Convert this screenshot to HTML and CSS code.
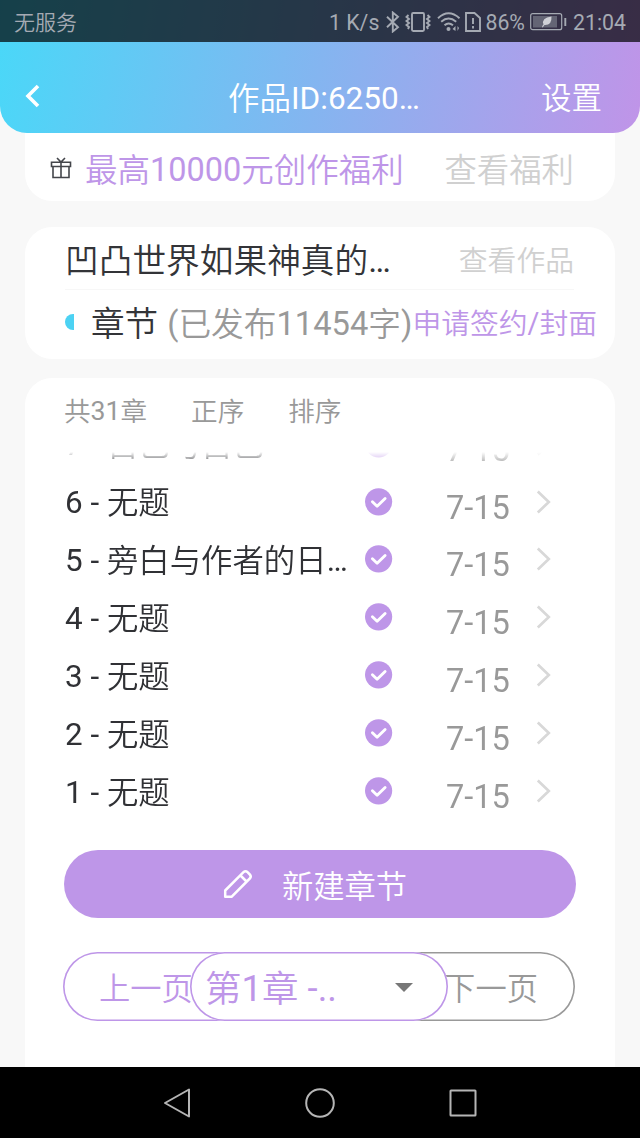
FILE: index.html
```html
<!DOCTYPE html>
<html lang="zh-CN">
<head>
    <meta charset="UTF-8">
    <meta name="viewport" content="width=device-width, initial-scale=1.0">
    <title>作品管理</title>
    <link rel="stylesheet" href="styles.css">
</head>
<body>
    <svg class="sprite" width="0" height="0">
        <symbol id="check" viewBox="0 0 28 28">
            <circle cx="13.600" cy="13.800" r="13.6" fill="#be96e8"/>
            <path d="M7.400 13.800l4.700 4.500 8-7.800" fill="none" stroke="#fff" stroke-width="2.9" stroke-linecap="round" stroke-linejoin="round"/>
        </symbol>
        <symbol id="arrow" viewBox="0 0 16 26">
            <path d="M1.8 2.500l11 10.500-11 10.500" fill="none" stroke="#d8d8d8" stroke-width="2.7"/>
        </symbol>
    </svg>

    <header class="header">
        <div class="status-bar">
            <span class="carrier">无服务</span>
            <div class="status-icons">
                <span class="speed">1 K/s</span>
                <svg class="bluetooth" width="14" height="22" viewBox="0 0 14 22"><path d="M1 5.8l11 10.400-5.200 4.300V1.500L12 5.800 1 16.200"/></svg>
                <svg class="vibrate" width="26" height="20" viewBox="0 0 26 20">
                    <rect x="7" y="1" width="12" height="18" rx="1.2"/>
                    <path d="M3.500 3l-2 2 2.500 2-2.500 2L4 11l-2.500 2L4 15l-1 2M22.500 3l2 2L22 7l2.500 2L22 11l2.500 2L22 15l1 2"/>
                </svg>
                <svg class="wifi" width="24" height="20" viewBox="0 0 24 20">
                    <path d="M1 6.200Q11.500-3.500 22.500 6.200M4.200 9.700Q11.500 3.300 19.200 9.700M7.500 13.200Q11.500 9.600 16 13.200"/>
                    <circle class="fill" cx="11.500" cy="17" r="2"/>
                    <path class="fill thin" d="M15.500 17l3-3v5zM20.500 14v5l1.500-3z"/>
                </svg>
                <svg class="sim" width="16" height="20" viewBox="0 0 16 20">
                    <path d="M1 1h8.500L15 6v13H1zM8 6v6M8 14v2.500"/>
                </svg>
                <span class="percent">86%</span>
                <svg class="battery" width="37" height="18" viewBox="0 0 37 18">
                    <rect class="thin" x=".7" y=".7" width="31" height="16" rx="2"/>
                    <rect class="level" x="3" y="3" width="24" height="11.500"/>
                    <path class="leaf" d="M12 14.200q.5-2 1.500-2.700Q11 5 21.500 3.500q.5 9-7 8.600-1 .7-1.500 2.100z"/>
                    <path d="M35.300 5v8"/>
                </svg>
                <span class="clock">21:04</span>
            </div>
        </div>
        <nav class="nav">
            <svg class="back" width="16" height="24" viewBox="0 0 16 24"><path d="M13 2L3 12l10 10" fill="none" stroke="#fff" stroke-width="3.600"/></svg>
            <h1 class="nav-title">作品<span class="n">ID:6250…</span></h1>
            <a class="nav-link">设置</a>
        </nav>
    </header>

    <main class="content">
        <section class="card welfare">
            <svg class="gift" width="22" height="22" viewBox="0 0 22 22">
                <path d="M1.500 5.200h19v4.300h-19zM3 9.500v11h16v-11M11 5.200v15.300M7 1l4 4 4-4" fill="none" stroke="#44464b" stroke-width="1.600"/>
            </svg>
            <span class="welfare-text">最高<span class="n">10000</span>元创作福利</span>
            <a class="welfare-link">查看福利</a>
        </section>

        <section class="card work">
            <div class="work-row">
                <h2 class="work-title">凹凸世界如果神真的<span class="n">…</span></h2>
                <a class="work-link">查看作品</a>
            </div>
            <div class="work-row chapter-row">
                <i class="dot"></i>
                <b class="chapter-label">章节</b>
                <span class="words"><span class="n">(</span>已发布<span class="n">11454</span>字<span class="n">)</span></span>
                <a class="apply">申请签约<span class="n">/</span>封面</a>
            </div>
        </section>

        <section class="card chapters">
            <div class="toolbar">
                <span>共<span class="n">31</span>章</span>
                <a>正序</a>
                <a>排序</a>
            </div>
            <div class="list">
                <div class="row"><span class="name"><span class="n">7 - </span>自己与自己</span><svg class="check"><use href="#check"/></svg><span class="date">7-15</span><svg class="arrow"><use href="#arrow"/></svg></div>
                <div class="row"><span class="name"><span class="n">6 - </span>无题</span><svg class="check"><use href="#check"/></svg><span class="date">7-15</span><svg class="arrow"><use href="#arrow"/></svg></div>
                <div class="row"><span class="name"><span class="n">5 - </span>旁白与作者的日<span class="n">…</span></span><svg class="check"><use href="#check"/></svg><span class="date">7-15</span><svg class="arrow"><use href="#arrow"/></svg></div>
                <div class="row"><span class="name"><span class="n">4 - </span>无题</span><svg class="check"><use href="#check"/></svg><span class="date">7-15</span><svg class="arrow"><use href="#arrow"/></svg></div>
                <div class="row"><span class="name"><span class="n">3 - </span>无题</span><svg class="check"><use href="#check"/></svg><span class="date">7-15</span><svg class="arrow"><use href="#arrow"/></svg></div>
                <div class="row"><span class="name"><span class="n">2 - </span>无题</span><svg class="check"><use href="#check"/></svg><span class="date">7-15</span><svg class="arrow"><use href="#arrow"/></svg></div>
                <div class="row"><span class="name"><span class="n">1 - </span>无题</span><svg class="check"><use href="#check"/></svg><span class="date">7-15</span><svg class="arrow"><use href="#arrow"/></svg></div>
            </div>
            <button class="create">
                <svg width="30" height="30" viewBox="0 0 30 30"><path d="M2.200 27.800v-6.300L20.500 3.200q2-2 4 0l2.300 2.300q2 2 0 4L8.500 27.800zM17.500 6.500l6 6" fill="none" stroke="#fff" stroke-width="2.500" stroke-linejoin="round"/></svg>
                <span>新建章节</span>
            </button>
            <div class="pager">
                <button class="page prev">上一页</button>
                <div class="page select"><span>第<span class="n">1</span>章<span class="n"> -..</span></span><i class="caret"></i></div>
                <button class="page next">下一页</button>
            </div>
        </section>
    </main>

    <footer class="system-nav">
        <svg width="28" height="32" viewBox="0 0 28 32"><path d="M26 2.500v27L2 16z"/></svg>
        <svg width="32" height="32" viewBox="0 0 32 32"><circle cx="16" cy="16" r="13.800"/></svg>
        <svg width="28" height="28" viewBox="0 0 28 28"><rect x="1.500" y="1.500" width="25" height="25" rx=".5"/></svg>
    </footer>
</body>
</html>
```

FILE: styles.css
```css
:root {
    --purple: #be96e8;
    --cyan: #4cd2f3;
    --dark: #333438;
    --gray: #999;
    --light: #d0d0d0;
}

* {
    margin: 0;
    padding: 0;
    box-sizing: border-box;
}

body {
    width: 640px;
    height: 1138px;
    display: flex;
    flex-direction: column;
    overflow: hidden;
    background: #f8f8f8;
    font-family: Roboto, "Noto Sans CJK SC", sans-serif;
    font-weight: 350;
    white-space: nowrap;
}

.sprite {
    display: none;
}

h1, h2, b {
    font-weight: inherit;
}

button {
    font-family: inherit;
    font-weight: inherit;
    border: none;
    background: none;
}

/* latin and digits */
.n {
    font-weight: 400;
    line-height: 1;
    vertical-align: 0.04em;
}

/* header */
.header {
    height: 133px;
    flex: none;
    background: linear-gradient(100deg, #49d8f8 0%, #84b5f0 50%, #c094e8 100%);
    border-radius: 0 0 27px 27px;
    overflow: hidden;
}

.status-bar {
    height: 42px;
    padding: 2px 14px 0;
    display: flex;
    align-items: center;
    justify-content: space-between;
    background: rgba(0, 0, 0, 0.7);
    color: #a5aab3;
    font-size: 21px;
}

.carrier {
    padding-bottom: 2px;
}

.status-icons {
    display: flex;
    align-items: center;
    font-size: 21.3px;
    font-weight: 400;
}

.status-icons svg {
    fill: none;
    stroke: #a5aab3;
    stroke-width: 1.9;
}

.status-icons .fill {
    fill: #a5aab3;
    stroke: none;
}

.status-icons .thin {
    stroke-width: 1.2;
}

.status-icons .level {
    fill: #646575;
    stroke: none;
}

.status-icons .leaf {
    fill: #cfd0d6;
    stroke: none;
}

.bluetooth { margin-left: 7px; }
.vibrate { margin-left: 5px; }
.wifi { margin-left: 6px; }
.sim { margin-left: 4px; }
.percent { margin-left: 4px; }
.battery { margin-left: 5px; }
.clock { margin-left: 6px; }

.nav {
    height: 91px;
    padding: 17px 38px 0 25px;
    display: grid;
    grid-template-columns: 203px 1fr auto;
    align-items: center;
    color: #fff;
}

.nav-title {
    font-size: 31.5px;
}

.nav-link {
    font-size: 30.5px;
}

/* cards */
.content {
    flex: 1;
    padding: 0 25px;
    display: flex;
    flex-direction: column;
    min-height: 0;
}

.card {
    flex: none;
    background: #fff;
    border-radius: 27px;
}

.welfare {
    height: 68px;
    padding: 1px 41px 0 25px;
    display: flex;
    align-items: center;
    border-radius: 0 0 27px 27px;
}

.welfare-text {
    margin-left: 13px;
    font-size: 32.5px;
    color: var(--purple);
}

.welfare-link {
    margin-left: auto;
    font-size: 32.4px;
    color: var(--light);
}

.work {
    height: 132px;
    margin-top: 26px;
    padding-left: 40px;
}

.work-row {
    height: 63px;
    display: flex;
    align-items: center;
    border-bottom: 1px solid #f7f7f7;
    margin-right: 41px;
}

.work-title {
    font-size: 33.7px;
    color: var(--dark);
}

.work-link {
    margin-left: auto;
    font-size: 28.8px;
    color: var(--light);
}

.chapter-row {
    border: none;
    margin-right: 0;
}

.dot {
    width: 9px;
    height: 16px;
    border-radius: 9px 0 0 9px;
    background: var(--cyan);
}

.chapter-label {
    margin-left: 17px;
    font-size: 33.6px;
    color: var(--dark);
}

.words {
    margin-left: 9px;
    font-size: 32.7px;
    color: var(--gray);
}

.apply {
    font-size: 28.8px;
    color: var(--purple);
}

.chapters {
    height: 720px;
    margin-top: 19px;
}

.toolbar {
    height: 74px;
    padding: 0 39px 11px;
    display: flex;
    align-items: center;
    gap: 44px;
    font-size: 26.6px;
    color: var(--gray);
}

/* chapter list, scrolled to the end with a fade on top */
.list {
    height: 368px;
    padding: 0 65px 0 40px;
    display: flex;
    flex-direction: column;
    justify-content: flex-end;
    overflow: hidden;
    -webkit-mask-image: linear-gradient(transparent, #000 14px);
    mask-image: linear-gradient(transparent, #000 14px);
}

.row {
    flex: none;
    height: 57.9px;
    display: grid;
    grid-template-columns: 300px 81px 90px 1fr;
    align-items: center;
}

.name {
    padding-bottom: 2px;
    font-size: 31.4px;
    color: #303135;
}

.check {
    width: 28px;
    height: 28px;
}

.date {
    padding-top: 12px;
    font-size: 32.6px;
    font-weight: 400;
    color: var(--gray);
}

.arrow {
    width: 16px;
    height: 26px;
}

.create {
    width: 512px;
    height: 68px;
    margin: 30px 0 0 39px;
    padding: 0 10px 0 0;
    display: flex;
    align-items: center;
    justify-content: center;
    gap: 29px;
    border-radius: 34px;
    background: var(--purple);
    color: #fff;
    font-size: 31.3px;
}

.pager {
    margin: 34px 0 0 38px;
    display: flex;
}

.page {
    height: 69px;
    box-shadow: inset 0 0 0 1.6px var(--purple);
    border-radius: 35px;
    color: var(--purple);
    font-size: 31.3px;
}

/* both side buttons run under the select */
.prev {
    width: 247px;
    padding: 0 0 1px 36px;
    text-align: left;
}

.select {
    width: 258px;
    margin: 0 -120px;
    padding: 0 35px 1px 15px;
    display: flex;
    align-items: center;
    justify-content: space-between;
    background: #fff;
    font-size: 36.5px;
    z-index: 1;
}

.caret {
    margin-top: 2px;
    border: 9px solid transparent;
    border-top-color: #777;
    border-bottom: none;
}

.next {
    width: 247px;
    padding: 0 37px 1px 0;
    text-align: right;
    box-shadow: inset 0 0 0 1.6px var(--gray);
    color: var(--gray);
}

/* android navigation */
.system-nav {
    height: 71px;
    flex: none;
    display: flex;
    align-items: center;
    justify-content: center;
    gap: 113px;
    background: #000;
    z-index: 2;
}

.system-nav svg {
    fill: none;
    stroke: #b5b5b5;
    stroke-width: 2;
    stroke-linejoin: round;
}
```
